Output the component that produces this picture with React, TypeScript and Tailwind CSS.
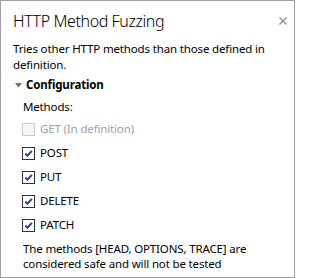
import React from 'react';

const methods = [
  { label: 'GET (In definition)', checked: false, disabled: true },
  { label: 'POST', checked: true },
  { label: 'PUT', checked: true },
  { label: 'DELETE', checked: true },
  { label: 'PATCH', checked: true },
];

function Checkbox({ checked, disabled }: { checked: boolean; disabled?: boolean }) {
  if (disabled) {
    return <span className="block w-[13px] h-[13px] border border-[#cccccc] bg-[#f4f4f4]" />;
  }
  return (
    <span className="flex items-center justify-center w-[13px] h-[13px] border border-[#333333] bg-white">
      {checked && (
        <svg width="9" height="9" viewBox="0 0 9 9">
          <path d="M1.3 4.4 L3.6 6.8 L7.8 1.9" fill="none" stroke="#2c4c94" strokeWidth="2.1" />
        </svg>
      )}
    </span>
  );
}

export default function App() {
  return (
    <div
      className="relative w-[295px] h-[278px] border border-[#a0a0a0] bg-white text-black text-[11.5px] tracking-[-0.15px]"
      style={{ fontFamily: '"Noto Sans", "Open Sans", sans-serif' }}
    >
      {/* header */}
      <div className="flex items-center pt-[8px] pl-[12px] pr-[7px]">
        <h1 className="text-[16px] leading-[24px] font-light tracking-[-0.4px]">HTTP Method Fuzzing</h1>
        <button className="ml-auto">
          <svg width="8" height="8" viewBox="0 0 8 8" className="block">
            <path d="M0.5 0.5 L7.5 7.5 M7.5 0.5 L0.5 7.5" stroke="#8a8a8a" strokeWidth="1.3" />
          </svg>
        </button>
      </div>

      {/* description */}
      <p className="mt-[8px] px-[12px] leading-[16px]">
        Tries other HTTP methods than those defined in definition.
      </p>

      {/* config section */}
      <div className="mt-[4px] flex items-center pl-[14px] h-[16px]">
        <svg width="7" height="5" viewBox="0 0 7 5" className="mr-[4px]">
          <path d="M0 0 H7 L3.5 4.5 Z" fill="#707070" />
        </svg>
        <span className="font-bold leading-[16px]">Configuration</span>
      </div>

      <div className="pl-[21px] pr-[12px]">
        <div className="mt-[6px] leading-[16px] pl-[1px]">Methods:</div>
        <div className="mt-[2px] flex flex-col">
          {methods.map((m) => (
            <label key={m.label} className="flex items-center h-[24px] gap-[5px]">
              <Checkbox checked={m.checked} disabled={m.disabled} />
              <span className={`leading-[16px] ${m.disabled ? 'text-[#a0a0a0]' : 'text-black'}`}>
                {m.label}
              </span>
            </label>
          ))}
        </div>
        <p className="mt-[4px] pl-[1px] leading-[15px]">
          The methods [HEAD, OPTIONS, TRACE] are considered safe and will not be tested
        </p>
      </div>
    </div>
  );
}
